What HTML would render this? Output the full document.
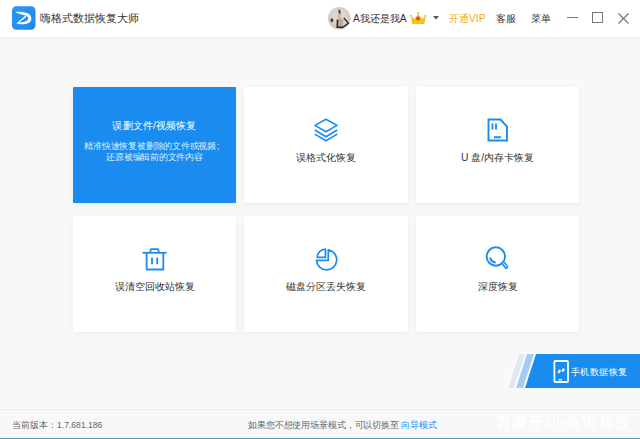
<!DOCTYPE html>
<html><head><meta charset="utf-8">
<style>
*{margin:0;padding:0;box-sizing:border-box}
html,body{width:640px;height:439px;overflow:hidden}
body{position:relative;background:#f8f8f8;font-family:"Liberation Sans",sans-serif;color:#333}
.abs{position:absolute}
#hdr{left:0;top:0;width:640px;height:37px;background:#fff;border-bottom:0}
.t{position:absolute;white-space:nowrap;line-height:1}
.card{position:absolute;background:#fff;border-radius:1px;box-shadow:0 2px 5px rgba(0,0,0,0.05)}
.card.blue{background:#1a8cf0}
.lbl{position:absolute;left:0;width:100%;text-align:center;white-space:nowrap;line-height:1;font-size:10.3px;color:#333}
svg{position:absolute;overflow:visible}
</style></head><body>
<div id="hdr" class="abs"></div>
<div class="abs" style="left:0;top:37px;width:640px;height:2px;background:#f2f2f2"></div>
<!-- logo -->
<svg style="left:11.5px;top:6px" width="23.5" height="24" viewBox="0 0 24 24">
  <defs><linearGradient id="lg" x1="0" y1="0" x2="1" y2="1"><stop offset="0" stop-color="#2b97f6"/><stop offset="1" stop-color="#1c89ee"/></linearGradient></defs>
  <rect x="0" y="0" width="24" height="24" rx="4.5" fill="url(#lg)"/>
  <path d="M3.5 5.6 C8 5.4 13.5 5.8 16 7.25 C18.5 8.5 19.8 10.5 19.8 13 C19.8 15 18.5 16.3 17 17 C15 17.9 13 18.2 10 18.4 C8 18.5 6 18.2 4.5 17.45 L7 16.5 C9 16.5 12.3 16.1 14.2 15.3 C15.9 14.6 16.6 13.7 16.6 12.6 C16.6 11.5 16.1 10.8 15.2 10.2 C13.8 9.2 12 8.8 10 8.4 C7.5 7.9 5 7 3.5 5.6 Z" fill="#fff"/>
  <path d="M4.5 17.45 L13.6 9.8 L14.9 10.7 L7.2 16.5 Z" fill="#fff"/>
</svg>
<div class="t" style="left:39.5px;top:12.5px;font-size:11.4px;color:#333">嗨格式数据恢复大师</div>

<!-- avatar -->
<svg style="left:327.5px;top:7px" width="22.5" height="22.5" viewBox="0 0 22 22">
  <defs><clipPath id="avc"><circle cx="11" cy="11" r="11"/></clipPath>
  <radialGradient id="avg" cx="0.5" cy="0.4" r="0.6"><stop offset="0" stop-color="#e6dfdb"/><stop offset="1" stop-color="#cfc6c1"/></radialGradient></defs>
  <circle cx="11" cy="11" r="11" fill="url(#avg)"/>
  <g clip-path="url(#avc)">
   <path d="M10.3 2.5 C11.5 2.3 12.6 3.5 12.3 6.6 L10.4 6.8 Z" fill="#3e302c"/>
   <path d="M9.2 6.8 C10 6.2 12.5 6.2 12.9 7 L13 13 L9 13 Z" fill="#d2bcb0"/>
   <path d="M8.6 12.5 C10 11.5 13.5 11.5 15 12.5 L14.5 19 L9 19.5 Z" fill="#bda69a"/>
   <path d="M9.3 12.5 L9 20.5" stroke="#2e2420" stroke-width="1.5" fill="none"/>
   <path d="M15.4 10.6 L20 16 L13 20.8" stroke="#2e2420" stroke-width="1.4" fill="none"/>
   <path d="M9 19.8 L14 19.8" stroke="#2e2420" stroke-width="1.4"/>
   <ellipse cx="3.8" cy="13" rx="1.3" ry="1.9" fill="#4a3c38"/>
  </g>
</svg>
<div class="t" style="left:353px;top:14.3px;font-size:10.2px;color:#333">A我还是我A</div>
<!-- crown -->
<svg style="left:409.5px;top:11.5px" width="16.5" height="13" viewBox="0 0 16.5 13">
  <defs><linearGradient id="cg" x1="0" y1="0" x2="0" y2="1"><stop offset="0" stop-color="#f39a1c"/><stop offset="0.55" stop-color="#f7c10e"/><stop offset="1" stop-color="#f4c80c"/></linearGradient></defs>
  <path d="M1 4 L2.2 12 H14.5 L15.5 4 L12 7 C10.5 5.5 9.2 4 8.2 2 C7.2 4 5.8 5.5 4.3 7 Z" fill="url(#cg)"/>
  <circle cx="1" cy="3.8" r="0.9" fill="#e9a21a"/>
  <circle cx="15.5" cy="3.8" r="0.9" fill="#e9a21a"/>
  <circle cx="8.2" cy="1.3" r="1" fill="#f0a41c"/>
  <circle cx="8" cy="6.5" r="1.9" fill="#e0521e"/>
</svg>
<svg style="left:433px;top:16.3px" width="6" height="4" viewBox="0 0 6 4"><path d="M0 0 L6 0 L3 3.5 Z" fill="#555"/></svg>
<div class="t" style="left:449px;top:14.4px;font-size:10.3px;color:#f5a623">开通VIP</div>
<div class="t" style="left:495.5px;top:14.4px;font-size:10.3px;color:#333">客服</div>
<div class="t" style="left:531px;top:14.4px;font-size:10.3px;color:#333">菜单</div>
<!-- window controls -->
<div class="abs" style="left:567px;top:17.3px;width:10.8px;height:1.2px;background:#777"></div>
<div class="abs" style="left:592px;top:12.2px;width:11.3px;height:11.3px;border:1.2px solid #777"></div>
<svg style="left:618px;top:12.5px" width="11" height="11" viewBox="0 0 11 11"><path d="M0.5 0.5 L10.5 10.5 M10.5 0.5 L0.5 10.5" stroke="#777" stroke-width="1.2"/></svg>

<!-- cards row 1 -->
<div class="card blue" style="left:73px;top:87px;width:163px;height:116px">
  <div class="lbl" style="top:33.8px;color:#fff;font-size:10px;transform:scale(1.018);transform-origin:50% 0">误删文件/视频恢复</div>
  <div class="lbl" style="top:55.2px;font-size:9px;transform:scale(0.975);transform-origin:50% 0;color:#ddeefd">精准快速恢复被删除的文件或视频<span style="display:inline-block;width:1em;text-align:left;padding-left:1px">;</span></div>
  <div class="lbl" style="top:66.2px;font-size:9px;transform:scale(0.975);transform-origin:50% 0;color:#ddeefd">还原被编辑前的文件内容</div>
</div>
<div class="card" style="left:244px;top:87px;width:164px;height:116px">
  <div class="lbl" style="top:66px">误格式化恢复</div>
</div>
<div class="card" style="left:416px;top:87px;width:163px;height:116px">
  <div class="lbl" style="top:66px">U 盘/内存卡恢复</div>
</div>
<!-- cards row 2 -->
<div class="card" style="left:73px;top:215.5px;width:163px;height:116px">
  <div class="lbl" style="top:66px">误清空回收站恢复</div>
</div>
<div class="card" style="left:244px;top:215.5px;width:164px;height:116px">
  <div class="lbl" style="top:66px">磁盘分区丢失恢复</div>
</div>
<div class="card" style="left:416px;top:215.5px;width:163px;height:116px">
  <div class="lbl" style="top:66px">深度恢复</div>
</div>

<!-- icons -->
<svg style="left:314px;top:118px" width="24" height="24" viewBox="0 0 24 24" fill="none" stroke="#1a8cf0" stroke-width="1.6" stroke-linejoin="round" stroke-linecap="round">
  <path d="M12 1.2 L23 7.4 L12 13.8 L1 7.4 Z"/>
  <path d="M1.2 12.3 L12 18.7 L22.8 12.3"/>
  <path d="M1.2 16.4 L12 22.8 L22.8 16.4"/>
</svg>
<svg style="left:487px;top:118px" width="22" height="24" viewBox="0 0 22 24" fill="none" stroke="#1a8cf0" stroke-width="1.9">
  <path d="M1.5 1.5 L13.5 1.5 L20 8.5 L20 22.5 L1.5 22.5 Z"/>
  <path d="M5.5 5.5 V11.5 M9 5.5 V11.5 M7 19.2 H14"/>
</svg>
<svg style="left:142px;top:247px" width="25" height="24" viewBox="0 0 25 24" fill="none" stroke="#1a8cf0" stroke-width="1.8" stroke-linejoin="round">
  <path d="M0.5 5.8 H24.5"/>
  <path d="M8 5.8 L8.8 2.6 Q9 2.2 9.5 2.2 H15.5 Q16 2.2 16.2 2.6 L17 5.8"/>
  <path d="M4.6 5.8 V22.5 H21.3 V5.8"/>
  <path d="M10 10.5 V17.2 M15.2 10.5 V17.2"/>
</svg>
<svg style="left:314px;top:247px" width="25" height="25" viewBox="0 0 25 25" fill="none" stroke="#1a8cf0" stroke-width="1.7" stroke-linejoin="round">
  <path d="M14.3 13.4 V2.83 A10.1 10.1 0 1 1 2.51 13.4 Z"/>
  <path d="M11.5 10.4 V2.2 A8.3 8.3 0 0 0 3.2 10.4 Z"/>
</svg>
<svg style="left:484px;top:245px" width="25" height="25" viewBox="0 0 25 25" fill="none" stroke="#1a8cf0" stroke-width="1.9">
  <circle cx="11.85" cy="11.5" r="9.2"/>
  <path d="M19.4 18.2 L22.3 21.9" stroke-width="4" stroke-linecap="round"/>
  <path d="M19.4 18.2 L22.3 21.9" stroke="#bfe0fb" stroke-width="1.2" stroke-linecap="round"/>
  <path d="M6.2 13.1 A6 6 0 0 0 10.9 17.5" stroke-linecap="round"/>
</svg>

<!-- mobile button -->
<svg style="left:505px;top:354px" width="135" height="34" viewBox="0 0 135 34">
  <path d="M12 0 H32 L21 34 H1 Z" fill="#fdfdfd"/>
  <path d="M14 0 H20 L9 34 H3 Z" fill="#dfe9f3"/>
  <path d="M22 0 H29 L18 34 H11 Z" fill="#a4cbf4"/>
  <path d="M31 0 H135 V34 H20 Z" fill="#1a8cf0"/>
</svg>
<svg style="left:553px;top:360px" width="16" height="23" viewBox="0 0 16 23" fill="none" stroke="#fff" stroke-width="1.8">
  <rect x="1.4" y="1" width="13.6" height="21" rx="1"/>
  <path d="M5.5 19.8 H9" stroke-width="1.2"/>
  <ellipse cx="6.3" cy="11.4" rx="1.2" ry="2" transform="rotate(30 6.3 11.4)" fill="#fff" stroke="none"/>
  <ellipse cx="10.1" cy="10.1" rx="1.2" ry="2" transform="rotate(30 10.1 10.1)" fill="#fff" stroke="none"/>
</svg>
<div class="t" style="left:570.5px;top:366.5px;font-size:10px;transform:scale(0.94);transform-origin:0 50%;color:#fff">手机数据恢复</div>

<!-- footer -->
<div class="abs" style="left:0;top:409px;width:640px;height:1px;background:#ececec"></div>
<div class="t" style="left:12px;top:421px;font-size:8.6px;color:#666">当前版本：1.7.681.186</div>
<div class="t" style="left:248px;top:421.3px;font-size:9px;transform:scale(0.987);transform-origin:0 50%;color:#666">如果您不想使用场景模式，可以切换至 <span style="color:#1a8cf0">向导模式</span></div>
<div class="t" style="left:496px;top:415px;font-size:15px;letter-spacing:1.2px;font-weight:700;color:#fff;text-shadow:0 0 1px rgba(0,0,0,0.025)">百家号/小鱼说科技</div>
<div class="abs" style="left:0;top:438px;width:640px;height:1px;background:#5b9aaa"></div>
</body></html>
